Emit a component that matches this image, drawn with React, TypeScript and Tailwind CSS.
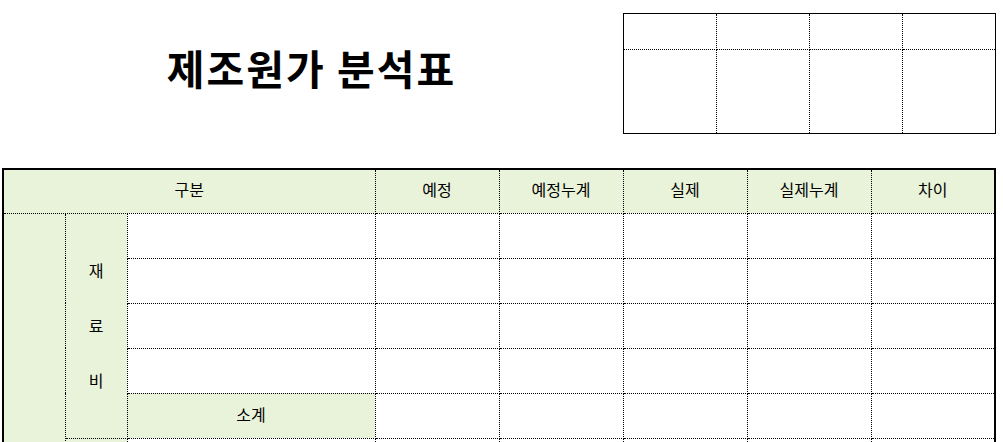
const heads = ['예정', '예정누계', '실제', '실제누계', '차이'];

function BlankCells() {
  return (
    <>
      {heads.map((h) => (
        <td key={h} className="border border-dotted border-black" />
      ))}
    </>
  );
}

function StampBox() {
  return (
    <table className="w-[373px] table-fixed border-collapse border border-solid border-black">
      <tbody>
        <tr className="h-[36px]">
          {[0, 1, 2, 3].map((i) => (
            <td key={i} className="border border-dotted border-black" />
          ))}
        </tr>
        <tr className="h-[84px]">
          {[0, 1, 2, 3].map((i) => (
            <td key={i} className="border border-dotted border-black" />
          ))}
        </tr>
      </tbody>
    </table>
  );
}

export default function App() {
  const green = 'bg-[#e9f3d9]';
  return (
    <div className="w-[1003px] h-[442px] overflow-hidden bg-white text-black font-['Noto_Sans_CJK_KR',sans-serif]">
      <div className="flex h-[168px]">
        <div className="w-[623px] flex items-center justify-center pb-[32px]">
          <h1 className="text-[41px] font-bold tracking-[2px]">제조원가 분석표</h1>
        </div>
        <div className="pt-[13px]">
          <StampBox />
        </div>
      </div>

      <div className="pl-[2px]">
        <table className="w-[993px] table-fixed border-collapse border-2 border-solid border-black text-[16px]">
          <colgroup>
            <col className="w-[62px]" />
            <col className="w-[62px]" />
            <col className="w-[248px]" />
            <col className="w-[124px]" />
            <col className="w-[124px]" />
            <col className="w-[124px]" />
            <col className="w-[124px]" />
            <col className="w-[124px]" />
          </colgroup>
          <tbody>
            <tr className={`h-[44px] ${green}`}>
              <td colSpan={3} className="border border-dotted border-black text-center pb-[4px]">
                구분
              </td>
              {heads.map((h) => (
                <td key={h} className="border border-dotted border-black text-center pb-[4px]">
                  {h}
                </td>
              ))}
            </tr>
            <tr className="h-[45px]">
              <td rowSpan={8} className={`border border-dotted border-black ${green}`} />
              <td rowSpan={5} className={`border border-dotted border-black ${green} text-center`}>
                <div className="flex flex-col items-center leading-[55px]">
                  <span>재</span>
                  <span>료</span>
                  <span>비</span>
                </div>
              </td>
              <td className="border border-dotted border-black" />
              <BlankCells />
            </tr>
            {[0, 1, 2].map((r) => (
              <tr key={r} className="h-[45px]">
                <td className="border border-dotted border-black" />
                <BlankCells />
              </tr>
            ))}
            <tr className="h-[45px]">
              <td className={`border border-dotted border-black text-center pb-[4px] ${green}`}>소계</td>
              <BlankCells />
            </tr>
            {[0, 1, 2].map((r) => (
              <tr key={r} className="h-[45px]">
                {r === 0 && <td rowSpan={3} className={`border border-dotted border-black ${green}`} />}
                <td className="border border-dotted border-black" />
                <BlankCells />
              </tr>
            ))}
          </tbody>
        </table>
      </div>
    </div>
  );
}
